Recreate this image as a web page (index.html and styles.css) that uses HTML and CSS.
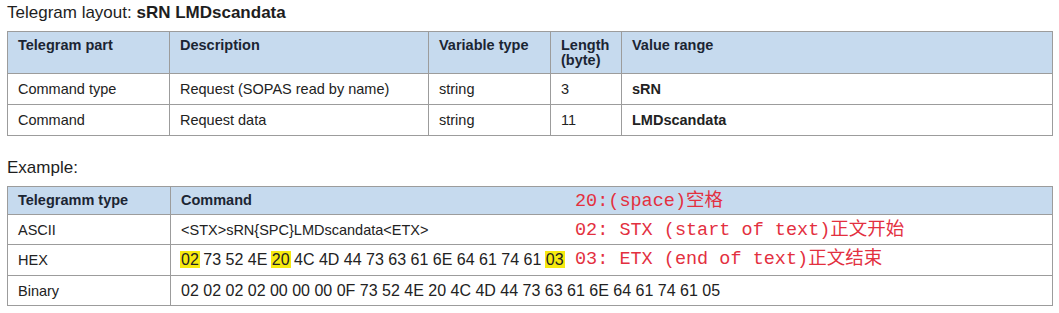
FILE: index.html
```html
<!DOCTYPE html>
<html lang="en">
<head>
<meta charset="utf-8">
<link rel="stylesheet" href="styles.css">
</head>
<body>
<div class="page">
  <h1 class="title">Telegram layout: <b>sRN LMDscandata</b></h1>
  <table class="grid layout">
    <colgroup>
      <col class="c1"><col class="c2"><col class="c3"><col class="c4"><col>
    </colgroup>
    <thead>
      <tr>
        <th>Telegram part</th>
        <th>Description</th>
        <th>Variable type</th>
        <th>Length<br>(byte)</th>
        <th>Value range</th>
      </tr>
    </thead>
    <tbody>
      <tr>
        <td>Command type</td>
        <td>Request (SOPAS read by name)</td>
        <td>string</td>
        <td>3</td>
        <td class="strong">sRN</td>
      </tr>
      <tr>
        <td>Command</td>
        <td>Request data</td>
        <td>string</td>
        <td>11</td>
        <td class="strong">LMDscandata</td>
      </tr>
    </tbody>
  </table>

  <h2 class="subtitle">Example:</h2>
  <div class="example">
    <table class="grid sample">
      <colgroup>
        <col class="e1"><col>
      </colgroup>
      <thead>
        <tr>
          <th>Telegramm type</th>
          <th>Command</th>
        </tr>
      </thead>
      <tbody>
        <tr class="r-ascii">
          <td>ASCII</td>
          <td>&lt;STX&gt;sRN{SPC}LMDscandata&lt;ETX&gt;</td>
        </tr>
        <tr class="r-hex">
          <td>HEX</td>
          <td class="data"><mark>02</mark> 73 52 4E <mark>20</mark> 4C 4D 44 73 63 61 6E 64 61 74 61 <mark>03</mark></td>
        </tr>
        <tr class="r-bin">
          <td>Binary</td>
          <td class="data">02 02 02 02 00 00 00 0F 73 52 4E 20 4C 4D 44 73 63 61 6E 64 61 74 61 05</td>
        </tr>
      </tbody>
    </table>
    <div class="notes">
      <p class="note n1">20:(space)空格</p>
      <p class="note n2">02: STX (start of text)正文开始</p>
      <p class="note n3">03: ETX (end of text)正文结束</p>
    </div>
  </div>
</div>
</body>
</html>
```

FILE: styles.css
```css
html, body {
  margin: 0;
  padding: 0;
  background: #ffffff;
}

.page {
  padding: 0 6px 0 7px;
  font-family: "Liberation Sans", Arial, sans-serif;
  color: #222222;
}

.title {
  margin: 0;
  height: 31px;
  padding-top: 2px;
  box-sizing: border-box;
  font-size: 17px;
  font-weight: normal;
  line-height: 22px;
  color: #1e1e1e;
}

.title b {
  font-weight: bold;
}

.grid {
  width: 1046px;
  border-collapse: collapse;
  table-layout: fixed;
  font-size: 14.5px;
}

.grid th,
.grid td {
  border: 1px solid #9c9c9c;
  text-align: left;
  vertical-align: top;
  padding: 7px 10px;
  line-height: 16px;
}

.grid th {
  background: #c6daee;
  color: #1b2533;
  font-weight: bold;
  font-size: 14.5px;
  line-height: 15px;
}

.layout th {
  padding-top: 6px;
  padding-bottom: 5px;
}

.c1 { width: 162px; }
.c2 { width: 259px; }
.c3 { width: 122px; }
.c4 { width: 71px; }

.strong {
  font-weight: bold;
}

.subtitle {
  margin: 0;
  height: 50px;
  padding-top: 21px;
  box-sizing: border-box;
  font-size: 17px;
  font-weight: normal;
  line-height: 22px;
  color: #1e1e1e;
}

.example {
  position: relative;
}

.e1 { width: 163px; }

.sample th {
  padding-top: 6px;
  padding-bottom: 6px;
}

.r-ascii td,
.r-bin td {
  padding-bottom: 6px;
}

.data {
  font-size: 16px;
}

mark {
  background: #f6ea10;
  color: #222222;
  padding: 0 1px;
  margin: 0 -1px;
}

.notes {
  position: absolute;
  left: 568px;
  top: 0;
}

.note {
  position: absolute;
  left: 0;
  margin: 0;
  white-space: nowrap;
  font-family: "Liberation Mono", "Noto Sans CJK SC", monospace;
  font-size: 18.5px;
  line-height: 22px;
  color: #e3303f;
}

.n1 { top: 5px; }
.n2 { top: 34px; }
.n3 { top: 63px; }
```
